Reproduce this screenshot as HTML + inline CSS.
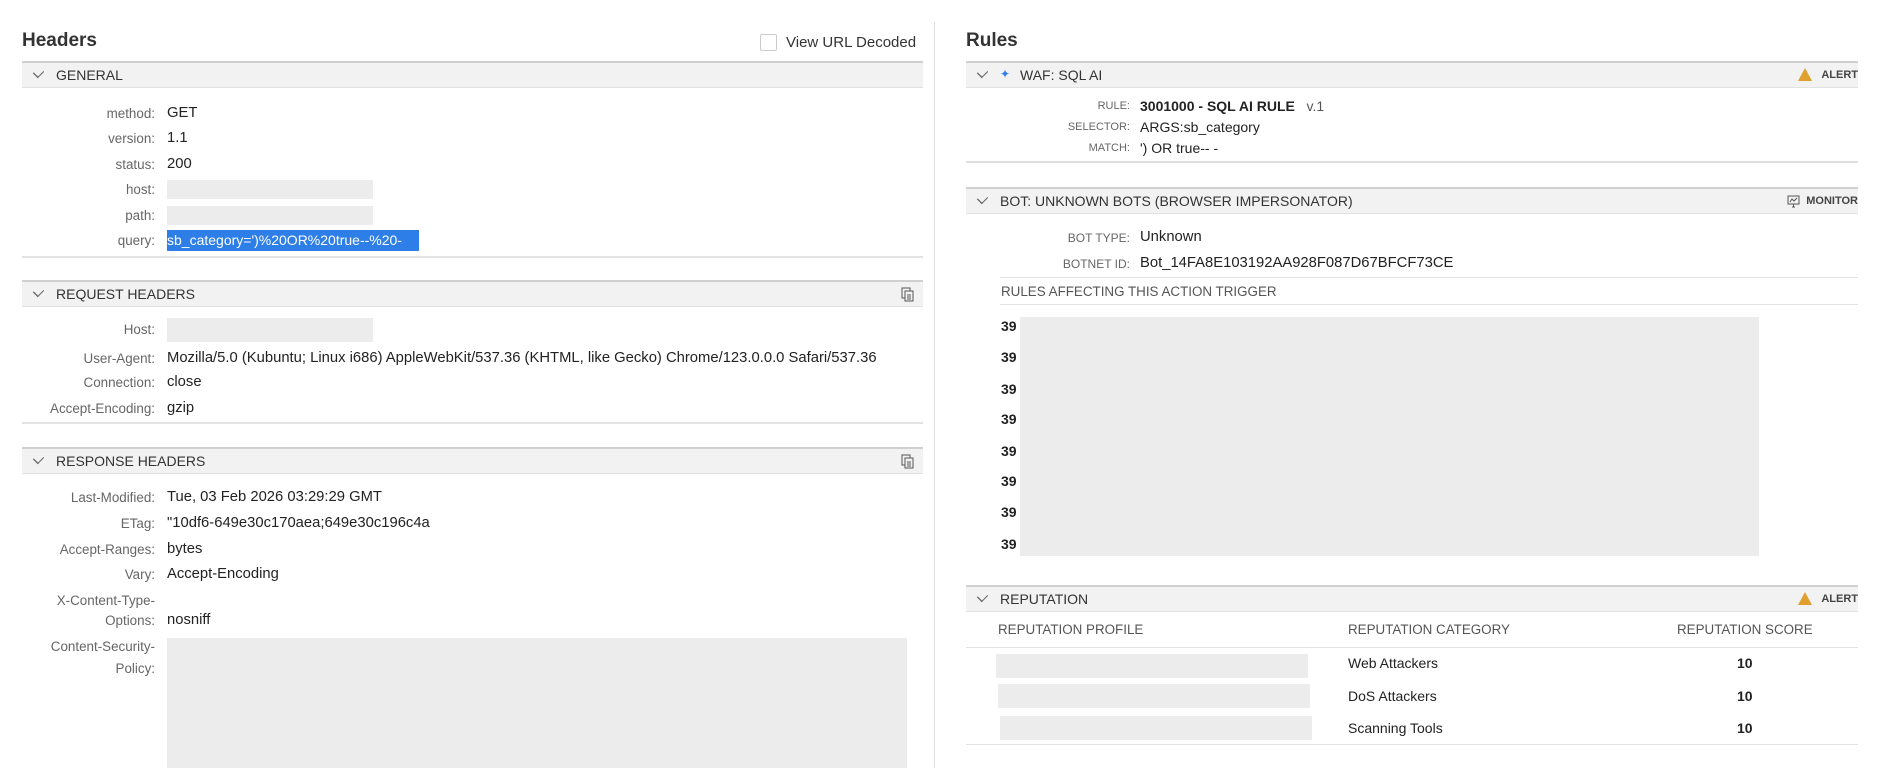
<!DOCTYPE html>
<html><head><meta charset="utf-8"><style>
*{margin:0;padding:0;box-sizing:border-box}
body{width:1890px;height:768px;background:#fff;font-family:"Liberation Sans",sans-serif;color:#222;position:relative;overflow:hidden}
.a{position:absolute;white-space:nowrap}
.t{font-size:19px;font-weight:bold;color:#333}
.bar{position:absolute;height:27px;background:#f2f2f2;border-top:2px solid #cfcfcf;border-bottom:1px solid #e2e2e2}
.bar .lb{position:absolute;top:4px;font-size:14px;color:#333}
.chev{position:absolute;width:7px;height:7px;border-right:1.2px solid #666;border-bottom:1.2px solid #666;transform:rotate(45deg) scaleY(1.3)}
.lab{position:absolute;font-size:13.4px;color:#666;text-align:right;width:200px}
.val{position:absolute;font-size:14.8px;color:#222}
.box{position:absolute;background:#ececec}
.hl{position:absolute;height:1px;background:#e3e3e3}
.sl{position:absolute;font-size:11px;color:#666;text-align:right;width:200px;text-transform:uppercase}
.n{position:absolute;left:1001px;font-size:14px;font-weight:bold}
.alert{position:absolute;font-size:11px;font-weight:bold;color:#444}
</style></head><body>
<div class="a t" style="left:22px;top:30px">Headers</div>
<div class="a" style="left:760px;top:34px;width:17px;height:17px;border:1px solid #ccc;border-radius:2px"></div>
<div class="a" style="left:786px;top:34px;font-size:15px;color:#333">View URL Decoded</div>
<div class="a" style="left:934px;top:22px;width:1px;height:746px;background:#ddd"></div>

<div class="bar" style="left:22px;top:61px;width:901px"><div class="chev" style="left:13px;top:6px"></div><div class="lb" style="left:34px">GENERAL</div></div>
<div class="lab" style="left:-45px;top:106px">method:</div><div class="val" style="left:167px;top:105px">GET</div>
<div class="lab" style="left:-45px;top:131px">version:</div><div class="val" style="left:167px;top:130px">1.1</div>
<div class="lab" style="left:-45px;top:157px">status:</div><div class="val" style="left:167px;top:156px">200</div>
<div class="lab" style="left:-45px;top:182px">host:</div><div class="box" style="left:167px;top:180px;width:206px;height:19px"></div>
<div class="lab" style="left:-45px;top:208px">path:</div><div class="box" style="left:167px;top:206px;width:206px;height:19px"></div>
<div class="lab" style="left:-45px;top:233px">query:</div>
<div class="a" style="left:167px;top:230px;width:252px;height:21px;background:#2e7ee8;color:#fff;font-size:14px;padding-top:2px;overflow:hidden">sb_category=')%20OR%20true--%20-</div>
<div class="hl" style="left:22px;top:256px;width:901px;height:2px"></div>

<div class="bar" style="left:22px;top:280px;width:901px"><div class="chev" style="left:13px;top:6px"></div><div class="lb" style="left:34px">REQUEST HEADERS</div>
<svg style="position:absolute;left:879px;top:5px" width="14" height="15" viewBox="0 0 14 15"><rect x="1" y="1" width="8" height="10" fill="none" stroke="#555"/><rect x="4" y="4" width="8" height="10" fill="#f2f2f2" stroke="#555"/><path d="M6 8h4M6 10h4M6 12h4" stroke="#555"/></svg></div>
<div class="lab" style="left:-45px;top:322px">Host:</div><div class="box" style="left:167px;top:318px;width:206px;height:24px"></div>
<div class="lab" style="left:-45px;top:351px">User-Agent:</div><div class="val" style="left:167px;top:350px">Mozilla/5.0 (Kubuntu; Linux i686) AppleWebKit/537.36 (KHTML, like Gecko) Chrome/123.0.0.0 Safari/537.36</div>
<div class="lab" style="left:-45px;top:375px">Connection:</div><div class="val" style="left:167px;top:374px">close</div>
<div class="lab" style="left:-45px;top:401px">Accept-Encoding:</div><div class="val" style="left:167px;top:400px">gzip</div>
<div class="hl" style="left:22px;top:422px;width:901px;height:2px"></div>

<div class="bar" style="left:22px;top:447px;width:901px"><div class="chev" style="left:13px;top:6px"></div><div class="lb" style="left:34px">RESPONSE HEADERS</div>
<svg style="position:absolute;left:879px;top:5px" width="14" height="15" viewBox="0 0 14 15"><rect x="1" y="1" width="8" height="10" fill="none" stroke="#555"/><rect x="4" y="4" width="8" height="10" fill="#f2f2f2" stroke="#555"/><path d="M6 8h4M6 10h4M6 12h4" stroke="#555"/></svg></div>
<div class="lab" style="left:-45px;top:490px">Last-Modified:</div><div class="val" style="left:167px;top:489px">Tue, 03 Feb 2026 03:29:29 GMT</div>
<div class="lab" style="left:-45px;top:516px">ETag:</div><div class="val" style="left:167px;top:515px">"10df6-649e30c170aea;649e30c196c4a</div>
<div class="lab" style="left:-45px;top:542px">Accept-Ranges:</div><div class="val" style="left:167px;top:541px">bytes</div>
<div class="lab" style="left:-45px;top:567px">Vary:</div><div class="val" style="left:167px;top:566px">Accept-Encoding</div>
<div class="lab" style="left:-45px;top:593px">X-Content-Type-</div>
<div class="lab" style="left:-45px;top:613px">Options:</div><div class="val" style="left:167px;top:612px">nosniff</div>
<div class="lab" style="left:-45px;top:639px">Content-Security-</div>
<div class="lab" style="left:-45px;top:661px">Policy:</div>
<div class="box" style="left:167px;top:638px;width:740px;height:130px"></div>

<div class="a t" style="left:966px;top:30px">Rules</div>
<div class="bar" style="left:966px;top:61px;width:892px"><div class="chev" style="left:13px;top:6px"></div>
<div style="position:absolute;left:34px;top:4px;color:#2e7ee8;font-size:12px">✦</div>
<div class="lb" style="left:54px">WAF: SQL AI</div>
<div style="position:absolute;right:46px;top:5px;width:0;height:0;border-left:7px solid transparent;border-right:7px solid transparent;border-bottom:13px solid #e0a030"></div>
<div class="alert" style="right:0;top:6px">ALERT</div></div>
<div class="sl" style="left:930px;top:100px">Rule:</div><div class="val" style="left:1140px;top:98px;font-size:14px"><b>3001000 - SQL AI RULE</b> &nbsp;&nbsp;<span style="color:#555">v.1</span></div>
<div class="sl" style="left:930px;top:121px">Selector:</div><div class="val" style="left:1140px;top:119px;font-size:14px">ARGS:sb_category</div>
<div class="sl" style="left:930px;top:142px">Match:</div><div class="val" style="left:1140px;top:140px;font-size:14px">') OR true-- -</div>
<div class="hl" style="left:966px;top:161px;width:892px;height:2px;background:#ddd"></div>

<div class="bar" style="left:966px;top:187px;width:892px"><div class="chev" style="left:13px;top:6px"></div><div class="lb" style="left:34px">BOT: UNKNOWN BOTS (BROWSER IMPERSONATOR)</div>
<svg style="position:absolute;right:58px;top:6px" width="13" height="13" viewBox="0 0 13 13"><rect x="1" y="1" width="11" height="8" fill="none" stroke="#555"/><path d="M3 7l2-3 2 2 3-3M5 12h3M6.5 9v3" stroke="#555" fill="none"/></svg>
<div class="alert" style="right:0;top:6px">MONITOR</div></div>
<div class="sl" style="left:930px;top:231px;font-size:12px">Bot type:</div><div class="val" style="left:1140px;top:229px">Unknown</div>
<div class="sl" style="left:930px;top:257px;font-size:12px">Botnet ID:</div><div class="val" style="left:1140px;top:255px">Bot_14FA8E103192AA928F087D67BFCF73CE</div>
<div class="hl" style="left:1000px;top:277px;width:858px"></div>
<div class="a" style="left:1001px;top:284px;font-size:13.4px;color:#555">RULES AFFECTING THIS ACTION TRIGGER</div>
<div class="hl" style="left:1000px;top:304px;width:858px"></div>
<div class="box" style="left:1020px;top:317px;width:739px;height:239px"></div>
<div class="n" style="top:318px">39</div><div class="n" style="top:349px">39</div><div class="n" style="top:381px">39</div><div class="n" style="top:411px">39</div>
<div class="n" style="top:443px">39</div><div class="n" style="top:473px">39</div><div class="n" style="top:504px">39</div><div class="n" style="top:536px">39</div>

<div class="bar" style="left:966px;top:585px;width:892px"><div class="chev" style="left:13px;top:6px"></div><div class="lb" style="left:34px">REPUTATION</div>
<div style="position:absolute;right:46px;top:5px;width:0;height:0;border-left:7px solid transparent;border-right:7px solid transparent;border-bottom:13px solid #e0a030"></div>
<div class="alert" style="right:0;top:6px">ALERT</div></div>
<div class="a" style="left:998px;top:622px;font-size:13.4px;color:#555">REPUTATION PROFILE</div>
<div class="a" style="left:1348px;top:622px;font-size:13.4px;color:#555">REPUTATION CATEGORY</div>
<div class="a" style="left:1677px;top:622px;font-size:13.4px;color:#555">REPUTATION SCORE</div>
<div class="hl" style="left:966px;top:647px;width:892px"></div>
<div class="box" style="left:996px;top:654px;width:312px;height:24px"></div>
<div class="box" style="left:998px;top:684px;width:312px;height:24px"></div>
<div class="box" style="left:1000px;top:716px;width:312px;height:24px"></div>
<div class="val" style="left:1348px;top:655px;font-size:14px">Web Attackers</div><div class="val" style="left:1737px;top:655px;font-weight:bold;font-size:14px">10</div>
<div class="val" style="left:1348px;top:688px;font-size:14px">DoS Attackers</div><div class="val" style="left:1737px;top:688px;font-weight:bold;font-size:14px">10</div>
<div class="val" style="left:1348px;top:720px;font-size:14px">Scanning Tools</div><div class="val" style="left:1737px;top:720px;font-weight:bold;font-size:14px">10</div>
<div class="hl" style="left:966px;top:744px;width:892px"></div>
</body></html>
